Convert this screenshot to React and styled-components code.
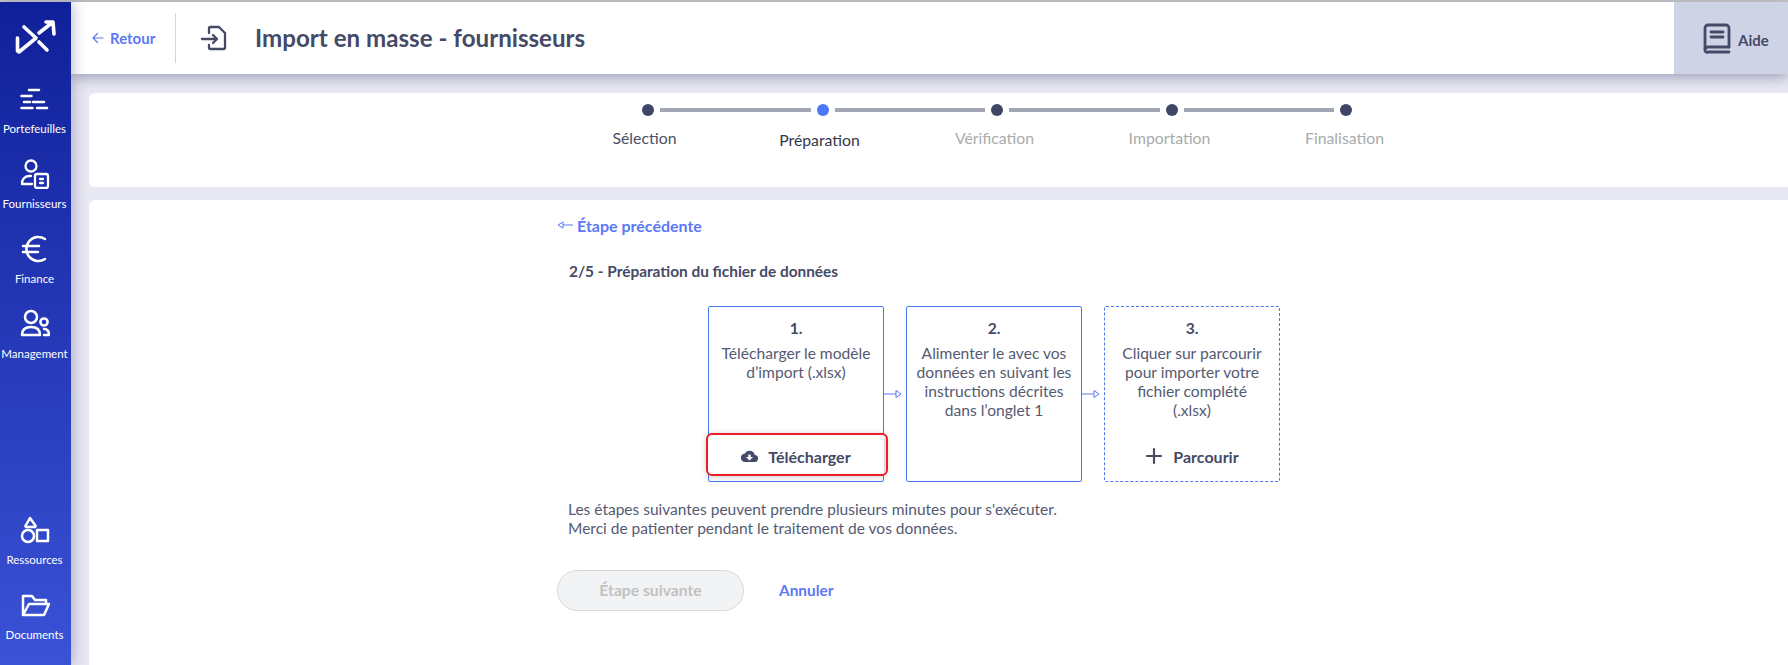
import React from "react";
import styled, { createGlobalStyle } from "styled-components";

const GlobalStyle = createGlobalStyle`
  html, body {
    margin: 0;
    padding: 0;
    height: 100%;
    overflow: hidden;
  }
  body {
    font-family: "Lato", "Noto Sans", sans-serif;
    color: #454a66;
    background: #e8e8f3;
  }
  #root {
    height: 100%;
  }
`;

const Page = styled.div`
  height: 665px;
  display: flex;
  flex-direction: column;
  border-top: 2px solid #c6c6c8;
  box-sizing: border-box;
`;
const Body = styled.div`
  flex: 1;
  display: flex;
  min-height: 0;
`;
const Sidebar = styled.nav`
  width: 71px;
  flex-shrink: 0;
  display: flex;
  flex-direction: column;
  align-items: center;
  background: linear-gradient(180deg, #10209a 0%, #3a52d6 100%);
  box-shadow: 3px 0 12px rgba(60, 60, 120, 0.3);
  position: relative;
  z-index: 3;
`;
const LogoWrap = styled.div`
  height: 72px;
  width: 100%;
  display: flex;
  svg {
    display: block;
  }
`;
const NavGroup = styled.div`
  width: 100%;
  display: flex;
  flex-direction: column;
  margin-top: ${(p) => p.$top || "0"};
`;
const NavItem = styled.a`
  height: 75px;
  display: flex;
  flex-direction: column;
  align-items: center;
  justify-content: flex-start;
  color: #fff;
  font-size: 11.5px;
  line-height: 14px;
  white-space: nowrap;
  padding-right: 2px;
  svg {
    display: block;
    margin-bottom: 8px;
  }
`;
const Main = styled.div`
  flex: 1;
  min-width: 0;
  display: flex;
  flex-direction: column;
`;
const Header = styled.header`
  height: 72px;
  flex-shrink: 0;
  display: flex;
  align-items: stretch;
  background: #fff;
  box-shadow: 0 4px 12px rgba(60, 60, 110, 0.4);
  position: relative;
  z-index: 2;
`;
const BackLink = styled.a`
  display: flex;
  align-items: center;
  gap: 6px;
  color: #5c78f5;
  font-size: 15px;
  font-weight: 700;
`;
const HeaderBack = styled.div`
  display: flex;
  align-items: center;
  margin-left: 21px;
  width: 83px;
  height: 50px;
  align-self: center;
  border-right: 1px solid #d5d5dc;
`;
const HeaderIcon = styled.div`
  display: flex;
  margin-left: 24px;
  margin-right: 27px;
  align-items: center;
`;
const Title = styled.h1`
  margin: 0 0 2px;
  align-self: center;
  font-size: 24.15px;
  font-weight: 700;
  color: #454a66;
`;
const HelpPanel = styled.div`
  margin-left: auto;
  width: 114px;
  display: flex;
  align-items: center;
  gap: 5px;
  padding-left: 27px;
  box-sizing: border-box;
  background: #cfd3e6;
  font-size: 15px;
  font-weight: 700;
`;
const HelpLabel = styled.span`
  margin-top: 3px;
`;
const Content = styled.div`
  flex: 1;
  min-height: 0;
  display: flex;
  flex-direction: column;
  gap: 13px;
  padding: 19px 0 0 18px;
`;
const StepperCard = styled.section`
  height: 94px;
  flex-shrink: 0;
  box-sizing: border-box;
  background: #fff;
  border-radius: 6px 0 0 6px;
  padding: 11px 0 0 553px;
`;
const Track = styled.div`
  display: flex;
  align-items: center;
  gap: 6px;
`;
const Dot = styled.span`
  width: 12px;
  height: 12px;
  border-radius: 50%;
  background: ${(p) => (p.$active ? "#4a78f8" : "#3f4566")};
`;
const Line = styled.span`
  width: 150.5px;
  height: 4px;
  background: #a3a6b5;
`;
const Labels = styled.div`
  display: grid;
  grid-template-columns: repeat(5, 175px);
  margin: 12px 0 0 -85px;
`;
const Label = styled.span`
  text-align: center;
  font-size: 15.8px;
  line-height: 20px;
  color: ${(p) => (p.$state === "todo" ? "#a9abab" : p.$state === "current" ? "#34384c" : "#4c5066")};
  margin-top: ${(p) => (p.$state === "current" ? "2px" : "0")};
`;
const FormCard = styled.section`
  flex: 1;
  background: #fff;
  border-radius: 6px 0 0 0;
  padding: 15px 0 0 468px;
`;
const PrevLink = styled(BackLink)`
  height: 20px;
  gap: 4px;
  font-size: 16px;
`;
const Heading = styled.h2`
  margin: 26px 0 0 12px;
  font-size: 15.4px;
  line-height: 20px;
  font-weight: 700;
  color: #454a66;
`;
const Flow = styled.div`
  margin: 25px 0 0 151px;
  display: flex;
  align-items: center;
`;
const Box = styled.div`
  width: 176px;
  height: 176px;
  box-sizing: border-box;
  border: 1px ${(p) => (p.$dashed ? "dashed" : "solid")} #4a78f0;
  border-radius: 2px;
  padding-top: 12px;
  display: flex;
  flex-direction: column;
  align-items: center;
  text-align: center;
  font-size: 15.6px;
  line-height: 19px;
  color: #555a72;
  position: relative;
`;
const BoxNumber = styled.strong`
  font-weight: 700;
  color: #454a66;
  margin-bottom: 6px;
`;
const BoxText = styled.span`
  white-space: nowrap;
`;
const BoxAction = styled.button`
  position: absolute;
  left: ${(p) => (p.$raised ? "-1px" : "0")};
  right: ${(p) => (p.$raised ? "-1px" : "0")};
  bottom: 7px;
  height: 39px;
  padding: 3px 0 0;
  border: 0;
  background: ${(p) => (p.$raised ? "#fff" : "transparent")};
  display: flex;
  align-items: center;
  justify-content: center;
  gap: 10px;
  font: inherit;
  font-size: 16px;
  font-weight: 700;
  color: #454a66;
  box-shadow: ${(p) => (p.$raised ? "0 1px 8px rgba(60, 60, 80, 0.4)" : "none")};
`;
const RedFrame = styled.span`
  position: absolute;
  left: -2px;
  right: -4px;
  top: -2px;
  bottom: -2px;
  border: 2px solid #ee1c25;
  border-radius: 6px;
`;
const FlowArrow = styled.div`
  width: 22px;
  display: flex;
  svg {
    display: block;
  }
`;
const Note = styled.p`
  margin: 18px 0 0 11px;
  font-size: 15.5px;
  line-height: 19px;
  color: #555a72;
`;
const Actions = styled.div`
  margin-top: 32px;
  display: flex;
  align-items: center;
  gap: 35px;
`;
const NextButton = styled.button`
  width: 187px;
  height: 41px;
  padding: 0 0 2px;
  box-sizing: border-box;
  border: 1px solid #d8d8da;
  border-radius: 21px;
  background: #f2f3f5;
  color: #c2c2c2;
  font: inherit;
  font-size: 15.7px;
  font-weight: 700;
`;
const CancelLink = styled.a`
  color: #5c78f5;
  font-size: 15.4px;
  font-weight: 700;
  margin-bottom: 2px;
`;

const Ico = ({ size = 30, vb = 30, color = "#fff", sw = 2.5, children }) => (
  <svg width={size} height={size} viewBox={`0 0 ${vb} ${vb}`} fill="none" stroke={color} strokeWidth={sw} strokeLinecap="round" strokeLinejoin="round">
    {children}
  </svg>
);

const Logo = () => (
  <svg width="71" height="72" viewBox="0 2 71 72" fill="none" stroke="#fff" strokeWidth="3.6" strokeLinecap="round" strokeLinejoin="round">
    <path d="M17.500 38v13l1.500 1L36 38 24 27" />
    <path d="M39 33l14-11h-7M53 22l1 12" />
    <path d="M39 42l8 8" />
  </svg>
);
const PortfolioIcon = () => (
  <Ico>
    <path d="M9 6h10M1.500 12h10M4 18h6M13 18h11M1.500 24h11M17 24h10" />
  </Ico>
);
const SupplierIcon = () => (
  <Ico sw={2.3}>
    <circle cx="11" cy="7" r="5.500" />
    <path d="M11 17H9a7 7 0 0 0-7 8h10" />
    <rect x="15" y="15" width="13" height="14" rx="2" />
    <path d="M20 20h3M20 24h3" />
  </Ico>
);
const EuroIcon = () => (
  <Ico>
    <path d="M25 5a12 12 0 1 0 0 20" />
    <path d="M3 12h16M3 18h15" />
  </Ico>
);
const TeamIcon = () => (
  <Ico>
    <circle cx="11" cy="8" r="6" />
    <circle cx="24" cy="13" r="3.600" />
    <path d="M2 26c0-6 4-8 9-8s9 2 9 8z" />
    <path d="M24 20c3 0 5 2 5 6h-5" />
  </Ico>
);
const ShapesIcon = () => (
  <Ico>
    <path d="M10 3l5 7a1 1 0 0 1-1 2H7a1 1 0 0 1-1-2l4-7z" />
    <circle cx="8" cy="21" r="6" />
    <rect x="17" y="15" width="11" height="11" />
  </Ico>
);
const FolderIcon = () => (
  <Ico>
    <path d="M3 24V6h9l3 4h11v4" />
    <path d="M3 25h21l5-11H9z" />
  </Ico>
);
const ImportIcon = () => (
  <Ico size={28} vb={28} color="#454a66" sw={2.3}>
    <path d="M9 9V4a1 1 0 0 1 1-1h9l6 6v15a1 1 0 0 1-1 1H10a1 1 0 0 1-1-1v-3" />
    <path d="M2 15h15M13 11l4 4-4 4" />
  </Ico>
);
const BookIcon = () => (
  <Ico size={32} vb={32} color="#454a66" sw={2.8}>
    <path d="M4 27V6a3 3 0 0 1 3-3h18a3 3 0 0 1 3 3v19" />
    <path d="M28 25H7a3 3 0 0 0-3 3 2 2 0 0 0 3 2h21" />
    <path d="M10 10h12M10 15h12" />
  </Ico>
);
const LeftArrow = () => (
  <Ico size={12} vb={12} color="#5c78f5" sw={1.2}>
    <path d="M11 6H1M5.500 1.500L1 6l4.500 4.500" />
  </Ico>
);
const LongArrow = () => (
  <svg width="16" height="10" viewBox="0 0 16 10" fill="none" stroke="#5c78f5" strokeWidth="1">
    <path d="M16 5H6M6 2v6L1 5z" />
  </svg>
);
const StepArrow = () => (
  <svg width="18" height="10" viewBox="0 0 18 10" fill="none" stroke="#5c78f5" strokeWidth="1">
    <path d="M0 5h12M12 1.500v7l5-3.500z" />
  </svg>
);
const CloudIcon = () => (
  <svg width="17" height="13" viewBox="0 0 17 13">
    <path fill="#454a66" d="M13.700 5A5.300 5.300 0 0 0 3.800 3.600 4.200 4.200 0 0 0 4.300 12h9a3.500 3.500 0 0 0 .4-7zM8.500 10.500L5 7h2.300V4.500h2.400V7H12z" />
  </svg>
);
const PlusIcon = () => (
  <Ico size={18} vb={18} color="#454a66" sw={2.2}>
    <path d="M9 2v14M2 9h14" />
  </Ico>
);

const steps = [
  { name: "Sélection", state: "done" },
  { name: "Préparation", state: "current" },
  { name: "Vérification", state: "todo" },
  { name: "Importation", state: "todo" },
  { name: "Finalisation", state: "todo" },
];

export default function App() {
  return (
    <>
      <GlobalStyle />
      <Page>
        <Body>
          <Sidebar>
            <LogoWrap>
              <Logo />
            </LogoWrap>
            <NavGroup $top="10px">
              <NavItem><PortfolioIcon />Portefeuilles</NavItem>
              <NavItem><SupplierIcon />Fournisseurs</NavItem>
              <NavItem><EuroIcon />Finance</NavItem>
              <NavItem><TeamIcon />Management</NavItem>
            </NavGroup>
            <NavGroup $top="auto">
              <NavItem><ShapesIcon />Ressources</NavItem>
              <NavItem><FolderIcon />Documents</NavItem>
            </NavGroup>
          </Sidebar>
          <Main>
            <Header>
              <HeaderBack>
                <BackLink><LeftArrow />Retour</BackLink>
              </HeaderBack>
              <HeaderIcon><ImportIcon /></HeaderIcon>
              <Title>Import en masse - fournisseurs</Title>
              <HelpPanel><BookIcon /><HelpLabel>Aide</HelpLabel></HelpPanel>
            </Header>
            <Content>
              <StepperCard>
                <Track>
                  {steps.map((s, i) => (
                    <React.Fragment key={s.name}>
                      {i > 0 && <Line />}
                      <Dot $active={s.state === "current"} />
                    </React.Fragment>
                  ))}
                </Track>
                <Labels>
                  {steps.map((s) => (
                    <Label key={s.name} $state={s.state}>{s.name}</Label>
                  ))}
                </Labels>
              </StepperCard>
              <FormCard>
                <PrevLink><LongArrow />Étape précédente</PrevLink>
                <Heading>2/5 - Préparation du fichier de données</Heading>
                <Flow>
                  <Box>
                    <BoxNumber>1.</BoxNumber>
                    <BoxText>Télécharger le modèle<br />d’import (.xlsx)</BoxText>
                    <BoxAction $raised><CloudIcon />Télécharger<RedFrame /></BoxAction>
                  </Box>
                  <FlowArrow><StepArrow /></FlowArrow>
                  <Box>
                    <BoxNumber>2.</BoxNumber>
                    <BoxText>Alimenter le avec vos<br />données en suivant les<br />instructions décrites<br />dans l’onglet 1</BoxText>
                  </Box>
                  <FlowArrow><StepArrow /></FlowArrow>
                  <Box $dashed>
                    <BoxNumber>3.</BoxNumber>
                    <BoxText>Cliquer sur parcourir<br />pour importer votre<br />fichier complété<br />(.xlsx)</BoxText>
                    <BoxAction><PlusIcon />Parcourir</BoxAction>
                  </Box>
                </Flow>
                <Note>
                  Les étapes suivantes peuvent prendre plusieurs minutes pour s'exécuter.<br />
                  Merci de patienter pendant le traitement de vos données.
                </Note>
                <Actions>
                  <NextButton disabled>Étape suivante</NextButton>
                  <CancelLink>Annuler</CancelLink>
                </Actions>
              </FormCard>
            </Content>
          </Main>
        </Body>
      </Page>
    </>
  );
}
